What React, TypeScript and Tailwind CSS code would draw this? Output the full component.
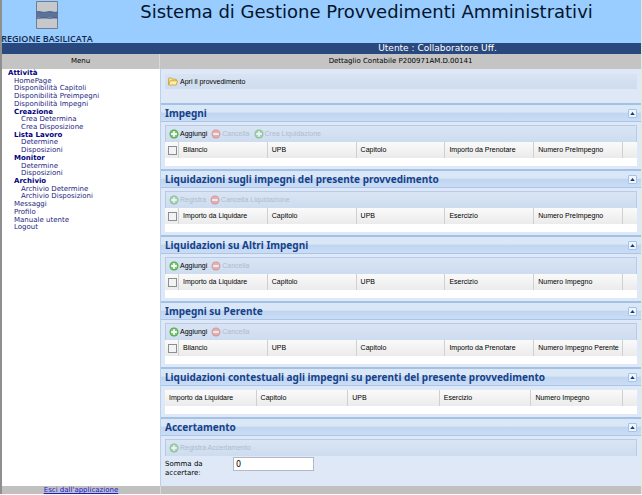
import React from "react";

type Action = { label: string; icon: "add" | "remove"; disabled?: boolean };

type SectionProps = {
  title: string;
  actions?: Action[];
  columns?: string[];
  selectable?: boolean;
  children?: React.ReactNode;
};

const menu: { label: string; level: 0 | 1 | 2; bold?: boolean }[] = [
  { label: "Attività", level: 0, bold: true },
  { label: "HomePage", level: 1 },
  { label: "Disponibilità Capitoli", level: 1 },
  { label: "Disponibilità Preimpegni", level: 1 },
  { label: "Disponibilità Impegni", level: 1 },
  { label: "Creazione", level: 1, bold: true },
  { label: "Crea Determina", level: 2 },
  { label: "Crea Disposizione", level: 2 },
  { label: "Lista Lavoro", level: 1, bold: true },
  { label: "Determine", level: 2 },
  { label: "Disposizioni", level: 2 },
  { label: "Monitor", level: 1, bold: true },
  { label: "Determine", level: 2 },
  { label: "Disposizioni", level: 2 },
  { label: "Archivio", level: 1, bold: true },
  { label: "Archivio Determine", level: 2 },
  { label: "Archivio Disposizioni", level: 2 },
  { label: "Messaggi", level: 1 },
  { label: "Profilo", level: 1 },
  { label: "Manuale utente", level: 1 },
  { label: "Logout", level: 1 },
];

const indent = { 0: "pl-[6px]", 1: "pl-[12px]", 2: "pl-[19px]" };

function ActionIcon({ kind }: { kind: "add" | "remove" }) {
  const add = kind === "add";
  return (
    <svg viewBox="0 0 20 20" className="size-[10px] shrink-0" aria-hidden="true">
      <circle cx="10" cy="10" r="9" fill={add ? "#4fa84a" : "#dc5a50"} />
      <circle cx="10" cy="10" r="7.2" fill={add ? "#7cc874" : "#ee8b80"} />
      {add ? (
        <path d="M8.2 4.5h3.6v3.7h3.7v3.6h-3.7v3.7H8.2v-3.7H4.5V8.2h3.7z" fill="#fff" />
      ) : (
        <path d="M4.5 8.2h11v3.6h-11z" fill="#fff" />
      )}
    </svg>
  );
}

function Toolbar({ actions }: { actions: Action[] }) {
  return (
    <div className="flex h-[17px] items-center gap-[4px] border border-[#b5cbe8] border-b-0 bg-linear-to-b from-[#d9e5f4] to-[#cddcef] pl-[3px]">
      {actions.map((a) => (
        <button
          key={a.label}
          type="button"
          disabled={a.disabled}
          className="flex items-center gap-[1px] whitespace-nowrap text-black disabled:text-[#aebccd]"
        >
          <span className={a.disabled ? "opacity-55" : ""}>
            <ActionIcon kind={a.icon} />
          </span>
          {a.label}
        </button>
      ))}
    </div>
  );
}

function DataGrid({ title, columns, selectable }: { title: string; columns: string[]; selectable: boolean }) {
  const cell = "border-r border-[#d0d0d0] p-0 pl-[4px] text-left font-normal whitespace-nowrap";
  return (
    <div className="bg-white pb-[8px]">
      <table aria-label={title} className="w-full table-fixed border-separate border-spacing-0">
        <colgroup>
          {selectable && <col className="w-[14px]" />}
          {columns.map((c) => (
            <col key={c} />
          ))}
          <col className="w-[14px]" />
        </colgroup>
        <thead>
          <tr className="h-[16px] bg-linear-to-b from-[#fafafa] to-[#ebebeb]">
            {selectable && (
              <th className="border-r border-[#d0d0d0] p-0 pl-[3px]">
                <input
                  type="checkbox"
                  aria-label={"Seleziona tutto: " + title}
                  className="block size-[9px] appearance-none border border-[#8a8f96] bg-[#f3f3f3]"
                />
              </th>
            )}
            {columns.map((c) => (
              <th key={c} scope="col" className={cell}>
                {c}
              </th>
            ))}
            <td className="p-0" />
          </tr>
        </thead>
      </table>
    </div>
  );
}

function Section({ title, actions, columns, selectable = true, children }: SectionProps) {
  return (
    <section>
      <div className="flex h-[19px] items-center justify-between border-t-2 border-b border-t-[#a3c1e4] border-b-[#a9c5ea] bg-linear-to-b from-[#dae7f6] from-45% via-[#bfd5f0] via-50% to-[#cbddf5] pr-[4px] pl-[4px]">
        <h2 className="font-['Noto_Sans',sans-serif] text-[10px] leading-[14px] font-bold whitespace-nowrap text-[#15428b]">
          {title}
        </h2>
        <button
          type="button"
          aria-label={"Comprimi " + title}
          className="flex size-[9px] items-center justify-center rounded-[1px] border border-[#a5c3ea] bg-[#edf4fc]"
        >
          <svg viewBox="0 0 6 4" className="h-[3px] w-[5px]" aria-hidden="true">
            <path d="M3 0l3 4H0z" fill="#1c3a6b" />
          </svg>
        </button>
      </div>
      <div className={actions ? "px-[4px] py-[3px]" : "px-[4px] pt-[4px] pb-[3px]"}>
        {actions && <Toolbar actions={actions} />}
        {columns && <DataGrid title={title} columns={columns} selectable={selectable} />}
      </div>
      {children}
    </section>
  );
}

export default function App() {
  return (
    <div className="flex flex-col border-r border-l-2 border-r-[#e4e8d8] border-l-[#8f8f8f] bg-white font-['Liberation_Sans',Arial,sans-serif] text-[7px] leading-[10px] text-black">
      <header className="bg-[#99ccff]">
        <div className="flex h-[43px]">
          <div className="flex w-[90px] shrink-0 flex-col items-center pt-px">
            <svg viewBox="0 0 24 28" className="h-[28px] w-[24px] shrink-0" aria-hidden="true">
              <path d="M1.500 .5h21v27h-21z" fill="#c6c8cc" stroke="#6d7f98" />
              <path d="M1 11q2.800-.8 5.500 0t5.500 0 5.500 0 5.500 0v6q-2.800 .8-5.500 0t-5.500 0-5.500 0-5.500 0z" fill="#5b7399" />
              <path d="M1 11q2.800-.8 5.500 0t5.500 0 5.500 0 5.500 0M1 17q2.800 .8 5.500 0t5.500 0 5.500 0 5.500 0" fill="none" stroke="#45618c" />
            </svg>
            <div className="mt-[4px] font-['Open_Sans',sans-serif] text-[9px] leading-[12px] font-semibold whitespace-nowrap text-[#10284c]">
              REGIONE BASILICATA
            </div>
          </div>
          <h1 className="flex-1 text-center font-['DejaVu_Sans',sans-serif] text-[18px] leading-[24px] whitespace-nowrap text-[#04142c]">
            Sistema di Gestione Provvedimenti Amministrativi
          </h1>
        </div>
        <div className="h-[11px] bg-[#29487d] pl-[232px] text-center font-['DejaVu_Sans',sans-serif] text-[9px] leading-[11px] text-white">
          Utente : Collaboratore Uff.
        </div>
      </header>

      <div className="grid grid-cols-[158px_1fr] bg-[#c4c4c4] text-center font-['DejaVu_Sans',sans-serif] leading-[15px]">
        <div className="border-r border-[#d8d8d8]">Menu</div>
        <div>Dettaglio Contabile P200971AM.D.00141</div>
      </div>

      <div className="grid grid-cols-[158px_1fr]">
        <nav aria-label="Menu">
          <ul className="grid h-[162px] auto-rows-fr font-['DejaVu_Sans',sans-serif] leading-[8px]">
            {menu.map((m, i) => (
              <li key={i} className={indent[m.level]}>
                <a href="#" className={m.bold ? "block font-bold text-[#000080]" : "block text-[#26267f]"}>
                  {m.label}
                </a>
              </li>
            ))}
          </ul>
        </nav>

        <main className="border-l border-[#b9d0ee] bg-[#dfe8f6]">
          <div className="h-[34px] px-[4px] pt-[5px]">
            <div className="flex h-[15px] items-center bg-linear-to-b from-[#d9e4f3] to-[#cfdcee] pl-[3px]">
              <button type="button" className="flex items-center gap-[2px]">
                <svg viewBox="0 0 20 18" className="h-[9px] w-[10px]" aria-hidden="true">
                  <path d="M1 16V3q0-1 1-1h5l2 2.500h7q1 0 1 1V8" fill="#f9e08a" stroke="#c59a25" strokeWidth="1.500" />
                  <path d="M1 16L4.500 7.500H19L16.500 16z" fill="#fdf0a8" stroke="#c59a25" strokeWidth="1.500" />
                </svg>
                Apri il provvedimento
              </button>
            </div>
          </div>

          <Section
            title="Impegni"
            actions={[
              { label: "Aggiungi", icon: "add" },
              { label: "Cancella", icon: "remove", disabled: true },
              { label: "Crea Liquidazione", icon: "add", disabled: true },
            ]}
            columns={["Bilancio", "UPB", "Capitolo", "Importo da Prenotare", "Numero PreImpegno"]}
          />
          <Section
            title="Liquidazioni sugli impegni del presente provvedimento"
            actions={[
              { label: "Registra", icon: "add", disabled: true },
              { label: "Cancella Liquidazione", icon: "remove", disabled: true },
            ]}
            columns={["Importo da Liquidare", "Capitolo", "UPB", "Esercizio", "Numero PreImpegno"]}
          />
          <Section
            title="Liquidazioni su Altri Impegni"
            actions={[
              { label: "Aggiungi", icon: "add" },
              { label: "Cancella", icon: "remove", disabled: true },
            ]}
            columns={["Importo da Liquidare", "Capitolo", "UPB", "Esercizio", "Numero Impegno"]}
          />
          <Section
            title="Impegni su Perente"
            actions={[
              { label: "Aggiungi", icon: "add" },
              { label: "Cancella", icon: "remove", disabled: true },
            ]}
            columns={["Bilancio", "UPB", "Capitolo", "Importo da Prenotare", "Numero Impegno Perente"]}
          />
          <Section
            title="Liquidazioni contestuali agli impegni su perenti del presente provvedimento"
            columns={["Importo da Liquidare", "Capitolo", "UPB", "Esercizio", "Numero Impegno"]}
            selectable={false}
          />
          <Section
            title="Accertamento"
            actions={[{ label: "Registra Accertamento", icon: "add", disabled: true }]}
          >
            <div className="-mt-[2px] flex h-[29px] items-start pl-[4px] font-['DejaVu_Sans',sans-serif] leading-[9px]">
              <label htmlFor="somma" className="w-[68px] pr-[20px] pt-[3px]">
                Somma da accertare:
              </label>
              <input
                id="somma"
                type="text"
                defaultValue="0"
                className="h-[14px] w-[81px] border border-[#b5b8c8] bg-white px-[2px] text-[8px]"
              />
            </div>
          </Section>
        </main>
      </div>

      <footer className="grid h-[8px] grid-cols-[158px_1fr] bg-[#c0c0c0] text-center font-['DejaVu_Sans',sans-serif] leading-[8px]">
        <a href="#" className="text-[#1a1ad0] underline">
          Esci dall'applicazione
        </a>
        <div className="border-l border-[#d8d8d8]" />
      </footer>
    </div>
  );
}
